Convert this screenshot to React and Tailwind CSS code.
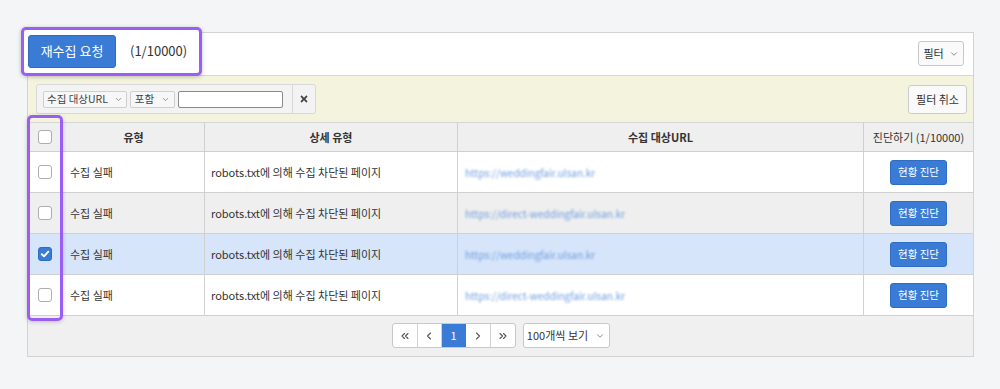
import React from "react";
import { ChevronDown, ChevronLeft, ChevronRight, ChevronsLeft, ChevronsRight } from "lucide-react";
import { FaTimes } from "react-icons/fa";

const font = { fontFamily: '"Noto Sans CJK KR", "Noto Sans", sans-serif' };

function Check({ checked }) {
  if (checked) {
    return (
      <span className="w-[14px] h-[14px] rounded-[3px] bg-[#3a7bd5] border border-[#2f6cc3] flex items-center justify-center">
        <svg width="10" height="10" viewBox="0 0 10 10">
          <path d="M1.8 5.2 L4 7.3 L8.3 2.7" stroke="white" strokeWidth="1.9" fill="none" strokeLinecap="round" strokeLinejoin="round" />
        </svg>
      </span>
    );
  }
  return <span className="w-[14px] h-[14px] rounded-[3px] bg-white border border-[#adadad]" />;
}

const rows = [
  { url: "https://weddingfair.ulsan.kr", bg: "bg-white" },
  { url: "https://direct-weddingfair.ulsan.kr", bg: "bg-[#efefef]" },
  { url: "https://weddingfair.ulsan.kr", bg: "bg-[#d6e5f9]", checked: true },
  { url: "https://direct-weddingfair.ulsan.kr", bg: "bg-white" },
];

export default function App() {
  return (
    <div className="w-[1000px] h-[389px] bg-[#f4f5f7] pt-[32px] pl-[27px]" style={font}>
      <div className="w-[947px] border border-[#d3d3d3] bg-white">
        {/* header */}
        <div className="h-[43px] flex items-start justify-between border-b border-[#d6d6d6] pr-[9px]">
          <div className="relative z-10 -ml-[7px] -mt-[6px] h-[49px] w-[181px] border-[3px] border-[#9b5ef5] rounded-[5px] bg-white shadow-[0_1px_4px_rgba(0,0,0,0.25)] flex items-center pl-[4px] pb-[1px]">
            <button className="h-[33px] w-[88px] rounded-[3px] bg-[#3a7bd5] border border-[#2f6cc3] text-white text-[13px]">
              재수집 요청
            </button>
            <span className="ml-[14px] text-[13px] text-[#333]">(1/10000)</span>
          </div>
          <button className="mt-[8px] h-[25px] w-[46px] rounded-[3px] border border-[#c8c8c8] bg-[#fafafa] text-[11px] text-[#333] flex items-center justify-center gap-[5px]">
            필터 <ChevronDown size={10} color="#777" />
          </button>
        </div>
        {/* filter bar */}
        <div className="h-[47px] bg-[#f4f4de] flex items-center justify-between pl-[8px] pr-[6px] border-b border-[#d6d6d6]">
          <div className="h-[30px] w-[280px] border border-[#d8d8d8] rounded-[3px] bg-[#f3f3f3] flex items-center">
            <div className="flex items-center gap-[3px] pl-[6px] w-[255px]">
              <span className="h-[17px] w-[84px] border border-[#cfcfcf] rounded-[2px] bg-[#f7f7f7] text-[10.5px] text-[#444] flex items-center justify-center gap-[6px]">
                수집 대상URL <ChevronDown size={9} color="#777" />
              </span>
              <span className="h-[17px] w-[45px] border border-[#cfcfcf] rounded-[2px] bg-[#f7f7f7] text-[10.5px] text-[#444] flex items-center justify-center gap-[7px]">
                포함 <ChevronDown size={9} color="#777" />
              </span>
              <span className="h-[17px] w-[105px] border border-[#8a8a8a] rounded-[2px] bg-white" />
            </div>
            <div className="h-full border-l border-[#d8d8d8] flex-1 flex items-center justify-center">
              <FaTimes size={10} color="#444" />
            </div>
          </div>
          <button className="h-[29px] w-[59px] rounded-[3px] border border-[#cbcbcb] bg-[#fafafa] text-[11px] text-[#333]">
            필터 취소
          </button>
        </div>
        {/* table */}
        <div className="relative">
          <div className="flex h-[29px] bg-[#efefef] border-b border-[#cfcfcf] text-[11px] font-bold text-[#333]">
            <div className="w-[35px] border-r border-[#cfcfcf] flex items-center justify-center">
              <Check />
            </div>
            <div className="w-[142px] border-r border-[#cfcfcf] flex items-center justify-center">유형</div>
            <div className="w-[253px] border-r border-[#cfcfcf] flex items-center justify-center">상세 유형</div>
            <div className="w-[406px] border-r border-[#cfcfcf] flex items-center justify-center">수집 대상URL</div>
            <div className="flex-1 flex items-center justify-center font-normal">진단하기 (1/10000)</div>
          </div>
          {rows.map((r, i) => (
            <div key={i} className={`flex h-[41px] border-b border-[#d0d0d0] text-[11px] text-[#333] ${r.bg}`}>
              <div className="w-[35px] border-r border-[#d0d0d0] flex items-center justify-center">
                <Check checked={r.checked} />
              </div>
              <div className="w-[142px] border-r border-[#d0d0d0] flex items-center pl-[7px]">수집 실패</div>
              <div className="w-[253px] border-r border-[#d0d0d0] flex items-center pl-[6px]">robots.txt에 의해 수집 차단된 페이지</div>
              <div className="w-[406px] border-r border-[#d0d0d0] flex items-center pl-[7px]">
                <span className="text-[#6f9de0] blur-[1.3px] text-[10px]">{r.url}</span>
              </div>
              <div className="flex-1 flex items-center justify-center">
                <button className="h-[25px] w-[57px] rounded-[3px] bg-[#3a7bd5] border border-[#2f6cc3] text-white text-[10.5px]">
                  현황 진단
                </button>
              </div>
            </div>
          ))}
          <div className="pointer-events-none absolute -left-[1px] -top-[8px] w-[36px] h-[206px] border-[3px] border-[#9b5ef5] rounded-[5px] shadow-[0_1px_4px_rgba(0,0,0,0.2)]" />
        </div>
        {/* footer */}
        <div className="h-[40px] bg-[#f0f0f0] flex items-start justify-center pt-[7px] gap-[7px]">
          <div className="flex h-[25px] border border-[#c9c9c9] rounded-[3px] bg-white overflow-hidden">
            <span className="w-[25px] flex items-center justify-center border-r border-[#d0d0d0]"><ChevronsLeft size={12} color="#555" strokeWidth={2.2} /></span>
            <span className="w-[24px] flex items-center justify-center border-r border-[#d0d0d0]"><ChevronLeft size={12} color="#555" strokeWidth={2.2} /></span>
            <span className="w-[24px] flex items-center justify-center bg-[#3a7bd5] text-white text-[11px]">1</span>
            <span className="w-[25px] flex items-center justify-center border-r border-[#d0d0d0]"><ChevronRight size={12} color="#555" strokeWidth={2.2} /></span>
            <span className="w-[24px] flex items-center justify-center"><ChevronsRight size={12} color="#555" strokeWidth={2.2} /></span>
          </div>
          <div className="h-[25px] w-[87px] border border-[#c9c9c9] rounded-[3px] bg-white text-[11px] text-[#333] flex items-center justify-center gap-[7px]">
            100개씩 보기 <ChevronDown size={10} color="#777" />
          </div>
        </div>
      </div>
    </div>
  );
}
